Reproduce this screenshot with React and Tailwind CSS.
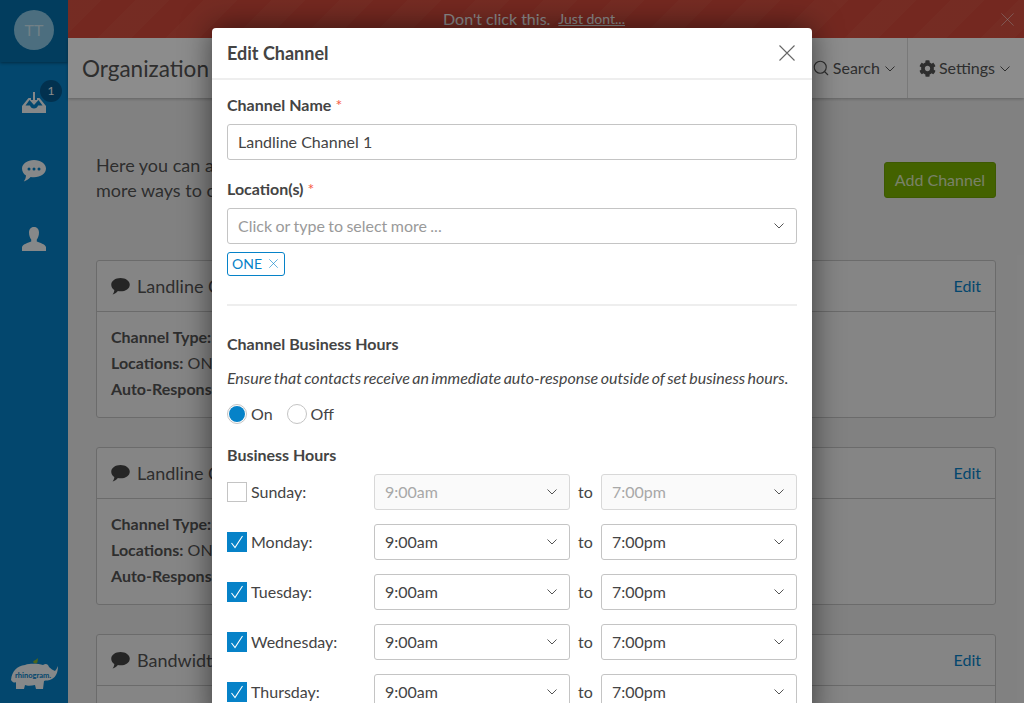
import React from "react";
import { Search } from "lucide-react";
import { FaCog } from "react-icons/fa";

function Chevron({ className = "" }) {
  return (
    <svg width="10" height="6" viewBox="0 0 10 6" fill="none" stroke="currentColor" strokeWidth="1" className={className}>
      <path d="M0.5 0.5 L5 5 L9.5 0.5" />
    </svg>
  );
}

function CloseX({ size = 16, className = "" }) {
  return (
    <svg width={size} height={size} viewBox="0 0 16 16" fill="none" stroke="currentColor" strokeWidth="1.1" className={className}>
      <path d="M0.5 0.5 L15.5 15.5 M15.5 0.5 L0.5 15.5" />
    </svg>
  );
}

function Bubble({ className = "", dots = false }) {
  return (
    <svg viewBox="0 0 24 22" className={className}>
      <path fill="currentColor" d="M12 0 C18.6 0 24 3.7 24 8.6 C24 13.5 18.6 17.2 12 17.2 C10.8 17.2 9.700 17.100 8.600 16.900 C6.800 18.900 4.200 20.800 1.800 21.500 C3.100 19.800 3.900 17.800 4 15.600 C1.500 14 0 11.500 0 8.600 C0 3.700 5.400 0 12 0 Z" />
      {dots && (
        <g fill="#0682c8">
          <circle cx="7" cy="9" r="1.500" />
          <circle cx="12" cy="9" r="1.500" />
          <circle cx="17" cy="9" r="1.500" />
        </g>
      )}
    </svg>
  );
}

function InboxIcon() {
  return (
    <svg viewBox="0 0 24 21" className="w-6 h-[21px]">
      <path fill="currentColor" d="M6.500 6 L9 6 L9 8 L7.500 8 L3.500 13.500 L8 13.500 C8.500 15.500 10 16.500 12 16.500 C14 16.500 15.500 15.500 16 13.500 L20.500 13.500 L16.500 8 L15 8 L15 6 L17.500 6 L24 14 L24 21 L0 21 L0 14 Z" />
      <path fill="none" stroke="currentColor" strokeWidth="2" d="M12 0 L12 10" />
      <path fill="currentColor" d="M7.500 8 L16.500 8 L12 13 Z" />
    </svg>
  );
}

function UserIcon() {
  return (
    <svg viewBox="0 0 24 24" className="w-6 h-6">
      <path fill="currentColor" d="M12 0 C15.500 0 17 2.500 17 5.500 C17 8.500 16 11 14.800 12.500 L14.800 14.500 C18 16 23 17 24 20 L24 24 L0 24 L0 20 C1 17 6 16 9.200 14.500 L9.200 12.500 C8 11 7 8.500 7 5.500 C7 2.500 8.500 0 12 0 Z" />
    </svg>
  );
}

function RhinoLogo() {
  return (
    <div className="relative w-12 h-8">
      <svg viewBox="0 0 48 32" className="w-12 h-8">
        <path fill="#8ab832" d="M23 4 C24 2 26 2 27 1 L28 0 L27.500 4 C26.500 6 24.500 6 23 4 Z" />
        <path fill="#f4f7f9" d="M1 22 C2 13 7 8 15 7 C21 5 29 6 33 7 C36 5 38 6 39 9 C41 11 43 12 45 13 C46 12 47 10 48 8 C48 14 46 19 42 21 C39 23 36 22 34 23 L33 31 L26 31 L25 27 C21 28 17 28 15 27 L14 31 L6 31 L6 24 C5 25 3 25 1 22 Z" />
      </svg>
      <span className="absolute left-[5px] top-[13px] text-[7.5px] leading-[10px] font-bold text-[#0682c8] whitespace-nowrap">rhinogram.</span>
    </div>
  );
}

function Sidebar() {
  return (
    <aside className="w-[68px] shrink-0 bg-[#0682c8] flex flex-col text-[#f4f7f9]">
      <div className="h-[62px] shrink-0 bg-[#056fab] shadow-[0_1px_3px_rgba(0,0,0,0.4)] pt-[10px] flex justify-center">
        <div className="w-10 h-10 rounded-full bg-[#8ac9e7] text-white/60 flex items-center justify-center text-base">TT</div>
      </div>
      <div className="relative mt-[30px] flex justify-center">
        <InboxIcon />
        <span className="absolute left-[40px] top-[-12px] w-[22px] h-[22px] rounded-full bg-[#055990] text-white text-xs flex items-center justify-center">1</span>
      </div>
      <div className="mt-[47px] flex justify-center">
        <Bubble dots className="w-6 h-[22px]" />
      </div>
      <div className="mt-[45px] flex justify-center">
        <UserIcon />
      </div>
      <div className="mt-auto mb-[13px] flex justify-center">
        <RhinoLogo />
      </div>
    </aside>
  );
}

function ChannelCard({ name, mt }) {
  return (
    <div className={`${mt} border border-[#c4c4c4] rounded-[3px] bg-[#f2f2f2] h-[158px] shrink-0 text-[#555]`}>
      <div className="h-[51px] border-b border-[#c4c4c4] pl-[14px] pr-[14px] flex items-center">
        <Bubble className="w-[19px] h-[17px] text-[#444]" />
        <span className="ml-[7px] text-lg whitespace-nowrap">{name}</span>
        <span className="ml-auto text-[#0682c8] text-base">Edit</span>
      </div>
      <div className="pl-[14px] pt-[12px] text-base leading-[26px]">
        <p className="font-bold">Channel Type:</p>
        <p><b>Locations:</b> ONE</p>
        <p className="font-bold">Auto-Response:</p>
      </div>
    </div>
  );
}

function Main() {
  return (
    <main className="flex-1 min-w-0 flex flex-col bg-[#ececec]">
      <div className="h-[38px] shrink-0 bg-[#d44a3b] bg-[repeating-linear-gradient(135deg,rgba(255,255,255,0.03)_0px,rgba(255,255,255,0.03)_24px,transparent_24px,transparent_48px)] flex items-center pr-[24px] relative">
        <div className="flex-1 flex justify-center items-center gap-2 text-white text-base">
          <span>Don't click this.</span>
          <span className="underline text-sm">Just dont...</span>
        </div>
        <CloseX size={13} className="absolute right-[10px] top-[13px] text-white/50" />
      </div>
      <div className="h-[60px] shrink-0 bg-white shadow-[0_1px_3px_rgba(0,0,0,0.25)] flex items-center pl-[14px] text-[#555]">
        <h1 className="text-[22.5px] pt-[2px]">Organization</h1>
        <div className="ml-auto flex items-center h-full text-base">
          <div className="flex items-center pr-[12px]">
            <Search size={18} strokeWidth={1.5} />
            <span className="ml-[3px]">Search</span>
            <Chevron className="ml-[5px] mt-[2px]" />
          </div>
          <div className="flex items-center h-full border-l border-[#ddd] pl-[11px] pr-[14px]">
            <FaCog size={17} />
            <span className="ml-[3px]">Settings</span>
            <Chevron className="ml-[5px] mt-[2px]" />
          </div>
        </div>
      </div>
      <div className="flex-1 min-h-0 pl-[28px] pr-[28px] flex flex-col overflow-hidden">
        <div className="flex items-start mt-[55px] h-[107px] shrink-0 text-[#555]">
          <p className="text-lg leading-[25px]">Here you can add channels<br />more ways to connect</p>
          <button className="ml-auto mt-[9px] w-[112px] h-9 rounded-[3px] bg-[#7ab300] border border-[#6fa304] text-white/75 text-base">Add Channel</button>
        </div>
        <ChannelCard name="Landline Channel 1" mt="" />
        <ChannelCard name="Landline Channel 2" mt="mt-[29px]" />
        <ChannelCard name="Bandwidth" mt="mt-[29px]" />
      </div>
    </main>
  );
}

function Label({ children, required }) {
  return (
    <div className="text-base font-bold leading-5 text-[#444]">
      {children}
      {required && <span className="ml-[4px] text-[#f65a46] font-normal">*</span>}
    </div>
  );
}

function SelectBox({ value, placeholder, disabled, className = "" }) {
  return (
    <div className={`${className} h-9 border rounded-[3px] flex items-center pl-[10px] pr-[12px] text-base ${disabled ? "bg-[#fafafa] border-[#d8d8d8] text-[#a8a8a8]" : "bg-white border-[#c4c4c4] text-[#444]"}`}>
      <span className={placeholder ? "text-[#9a9a9a] [word-spacing:-0.7px]" : ""}>{value || placeholder}</span>
      <Chevron className="ml-auto text-[#555]" />
    </div>
  );
}

function HoursRow({ day, checked, disabled }) {
  return (
    <div className="flex items-center h-9 mb-[14px]">
      <div className="w-[147px] flex items-center shrink-0">
        {checked ? (
          <span className="w-5 h-5 bg-[#0682c8] flex items-center justify-center">
            <svg width="14" height="14" viewBox="0 0 14 14" fill="none" stroke="white" strokeWidth="1.100">
              <path d="M1.500 8 L5 12.500 L12.500 1" />
            </svg>
          </span>
        ) : (
          <span className="w-5 h-5 border border-[#c4c4c4] bg-white" />
        )}
        <span className="ml-[4px] text-base text-[#444]">{day}:</span>
      </div>
      <SelectBox value="9:00am" disabled={disabled} className="w-[196px]" />
      <span className="w-[31px] text-center text-base text-[#444]">to</span>
      <SelectBox value="7:00pm" disabled={disabled} className="w-[196px]" />
    </div>
  );
}

function Modal() {
  return (
    <div className="w-[600px] shrink-0 bg-white rounded-t-[4px] shadow-[0_0_30px_rgba(0,0,0,0.55)]">
      <div className="h-[52px] border-b-2 border-[#eeeeee] pl-[15px] pr-[17px] flex items-center justify-between">
        <h2 className="text-lg font-bold text-[#444]">Edit Channel</h2>
        <CloseX size={16} className="text-[#666]" />
      </div>
      <div className="px-[15px] pt-[15px]">
        <Label required>Channel Name</Label>
        <div className="mt-[9px] h-9 border border-[#c4c4c4] rounded-[3px] flex items-center pl-[10px] text-base text-[#444]">Landline Channel 1</div>
        <div className="mt-[19px]"><Label required>Location(s)</Label></div>
        <SelectBox placeholder="Click or type to select more ..." className="mt-[9px]" />
        <div className="mt-[8px] w-[58px] h-6 border border-[#0682c8] rounded-[3px] flex items-center pl-[4px] text-sm text-[#0682c8]">
          ONE
          <CloseX size={9} className="ml-[7px] mb-[2px]" />
        </div>
        <div className="mt-[28px] border-t-2 border-[#eeeeee]" />
        <div className="mt-[28px]"><Label>Channel Business Hours</Label></div>
        <p className="mt-[14px] text-base italic leading-5 text-[#444] whitespace-nowrap [word-spacing:-1.35px]">Ensure that contacts receive an immediate auto-response outside of set business hours.</p>
        <div className="mt-[16px] flex items-center text-base text-[#444] h-5">
          <span className="w-5 h-5 rounded-full border border-[#c4c4c4] flex items-center justify-center">
            <span className="w-4 h-4 rounded-full bg-[#0682c8]" />
          </span>
          <span className="ml-[4px]">On</span>
          <span className="ml-[14px] w-5 h-5 rounded-full border border-[#c4c4c4]" />
          <span className="ml-[4px]">Off</span>
        </div>
        <div className="mt-[21px]"><Label>Business Hours</Label></div>
        <div className="mt-[9px]">
          <HoursRow day="Sunday" disabled />
          <HoursRow day="Monday" checked />
          <HoursRow day="Tuesday" checked />
          <HoursRow day="Wednesday" checked />
          <HoursRow day="Thursday" checked />
        </div>
      </div>
    </div>
  );
}

export default function App() {
  return (
    <div className="relative w-full h-[703px] overflow-hidden flex font-[Lato,sans-serif]">
      <Sidebar />
      <Main />
      <div className="absolute inset-0 bg-black/45 flex justify-center items-start pt-[28px]">
        <Modal />
      </div>
    </div>
  );
}
